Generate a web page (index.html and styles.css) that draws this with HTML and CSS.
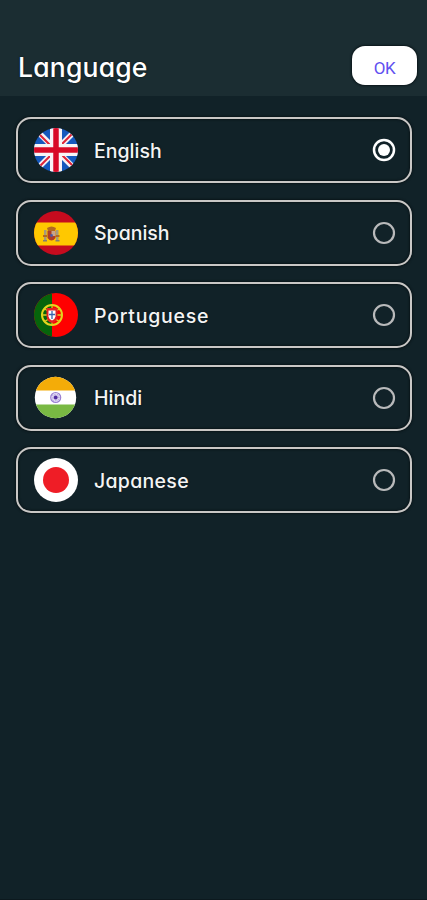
FILE: index.html
```html
<!DOCTYPE html>
<html lang="en">
<head>
<meta charset="utf-8">
<title>Language</title>
<link rel="stylesheet" href="styles.css">
</head>
<body>
<header class="bar">
  <h1 class="title">Language</h1>
  <button class="ok">OK</button>
</header>
<main class="list">
  <div class="row">
    <svg class="flag" viewBox="0 0 44 44">
      <defs><clipPath id="disc"><circle cx="22" cy="22" r="22"/></clipPath></defs>
      <g clip-path="url(#disc)">
        <path fill="#1558bd" d="M0 0h44v44H0z"/>
        <path stroke="#f4f0f4" stroke-width="5.500" d="M3 3l38 38M41 3L3 41"/>
        <path stroke="#df2336" stroke-width="2" d="M4 5l14 14M40 4L24 20M40 39L26 25M4 40l16-16"/>
        <path stroke="#f8f4f6" stroke-width="12" d="M22 0v44M0 22h44"/>
        <path stroke="#d80a27" stroke-width="5.500" d="M22 0v44M0 22h44"/>
      </g>
    </svg>
    <span class="name">English</span>
    <svg class="radio" viewBox="0 0 24 24"><circle class="ring on" cx="12" cy="12" r="10"/><circle fill="#fff" cx="12" cy="12" r="6"/></svg>
  </div>
  <div class="row">
    <svg class="flag" viewBox="0 0 44 44">
      <g clip-path="url(#disc)">
        <path fill="#c60b1e" d="M0 0h44v44H0z"/>
        <path fill="#ffc800" d="M0 11.500h44v23H0z"/>
        <path fill="#a69a7c" d="M10 19h2.500v11H10zM22 19h2.500v11H22z"/>
        <path fill="#b36a20" d="M9 24h4v2H9zM21.500 24h4v2h-4zM13 17q4.500-3 9 0l-1 3h-7z"/>
        <path fill="#ad3c25" d="M13.500 20h8v7q-4 5-8 0z"/>
        <path fill="#c7a58b" d="M17.500 20h4v5h-4z"/>
        <circle cx="17.500" cy="24.500" r="1.400" fill="#4e57a5"/>
        <path fill="#827d72" d="M9 29h4v1.500H9zM21.500 29h4v1.500h-4z"/>
      </g>
    </svg>
    <span class="name spanish">Spanish</span>
    <svg class="radio" viewBox="0 0 24 24"><circle class="ring" cx="12" cy="12" r="10"/></svg>
  </div>
  <div class="row">
    <svg class="flag" viewBox="0 0 44 44">
      <g clip-path="url(#disc)">
        <path fill="#f00" d="M0 0h44v44H0z"/>
        <path fill="#06640b" d="M0 0h18v44H0z"/>
        <circle cx="18" cy="22" r="10" fill="none" stroke="#e4d51d" stroke-width="2"/>
        <path fill="none" stroke="#dcd020" stroke-width="1.300" d="M8 22h20M10 15q8 8 16 0M10 29q8-7 16 0M18 12v20"/>
        <path fill="#e32124" d="M12.500 15h11v8q-.5 6-5.500 7-5-1-5.500-7z"/>
        <path fill="#fff" d="M14.500 17.500h7v6q-.5 3-3.500 4-3-1-3.500-4z"/>
        <path stroke="#3865ae" stroke-width="1.300" d="M18 18v8M15 21.500h6"/>
      </g>
    </svg>
    <span class="name portuguese">Portuguese</span>
    <svg class="radio" viewBox="0 0 24 24"><circle class="ring" cx="12" cy="12" r="10"/></svg>
  </div>
  <div class="row">
    <svg class="flag" viewBox="0 0 44 44">
      <defs><clipPath id="small"><circle cx="21.500" cy="21.500" r="20.700"/></clipPath></defs>
      <g clip-path="url(#small)">
        <path fill="#fff" d="M0 0h44v44H0z"/>
        <path fill="#f4ac08" d="M0 0h44v14.500H0z"/>
        <path fill="#79b943" d="M0 28.500h44V44H0z"/>
        <circle cx="21.700" cy="21.500" r="5" fill="#eee9fb" stroke="#9b80d2" stroke-width="1.200"/>
        <circle cx="21.700" cy="21.500" r="3" fill="none" stroke="#b6a5dd" stroke-width="2" stroke-dasharray=".8 .7"/>
        <circle cx="21.700" cy="21.500" r="1.900" fill="#512ba0"/>
      </g>
    </svg>
    <span class="name hindi">Hindi</span>
    <svg class="radio" viewBox="0 0 24 24"><circle class="ring" cx="12" cy="12" r="10"/></svg>
  </div>
  <div class="row">
    <svg class="flag" viewBox="0 0 44 44"><circle cx="22" cy="22" r="22" fill="#fff"/><circle cx="22" cy="22" r="13" fill="#ef1d26"/></svg>
    <span class="name japanese">Japanese</span>
    <svg class="radio" viewBox="0 0 24 24"><circle class="ring" cx="12" cy="12" r="10"/></svg>
  </div>
</main>
</body>
</html>
```
FILE: styles.css
```css
* { box-sizing: border-box; }
body {
  margin: 0;
  min-height: 900px;
  background: #112228;
  border-bottom: 1px solid #0c191e;
  color: #fff;
  font-family: Inter, "Noto Sans", sans-serif;
  font-feature-settings: "cv11" 1;
}
.bar {
  height: 96px;
  padding: 46px 10px 10px 17px;
  background: #1b2d32;
  display: flex;
  align-items: flex-start;
  justify-content: space-between;
}
.title {
  margin: 1px 0 0 1px;
  font-size: 26.5px;
  line-height: 40px;
  font-weight: 500;
  letter-spacing: .2px;
  text-shadow: 0 0 2px #071216;
}
.ok {
  width: 65px;
  height: 39px;
  padding: 5px 0 0;
  border: 0;
  border-radius: 13px;
  background: #fff;
  box-shadow: 0 0 2px 1px #0b171b;
  color: #6050f0;
  font: 400 17px/34px Roboto, sans-serif;
  letter-spacing: -.5px;
}
.list {
  padding: 21px 15px 0 16px;
  display: flex;
  flex-direction: column;
  gap: 16.5px;
}
.row {
  height: 66px;
  padding: 0 14px 0 16px;
  border: 2px solid #c9c7c5;
  border-radius: 15px;
  box-shadow: 0 0 2px 1px #0a1519, inset 0 0 2px 1px #0a1519;
  display: flex;
  align-items: center;
}
.flag { width: 44px; height: 44px; flex: none; }
.name {
  flex: 1;
  margin-left: 16px;
  padding-top: 1px;
  font-size: 19.5px;
  line-height: 28px;
  font-weight: 500;
  color: #f4f4f4;
  text-shadow: 0 0 2px #071216;
}
.portuguese { letter-spacing: .75px; }
.japanese { letter-spacing: .3px; }
.radio { width: 24px; height: 24px; overflow: visible; }
.ring { fill: none; stroke: #b9babb; stroke-width: 2.2; }
.ring.on { stroke: #fff; stroke-width: 2.5; }
```
